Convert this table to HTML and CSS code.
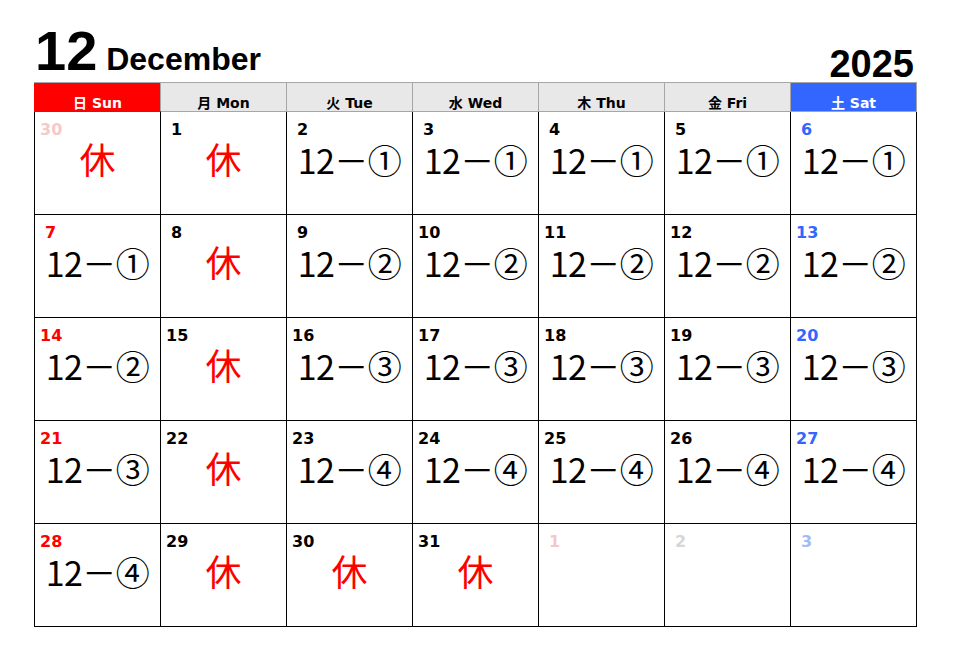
FILE: index.html
```html
<!DOCTYPE html>
<html lang="ja">
<head>
<meta charset="utf-8">
<title>December 2025</title>
<link rel="stylesheet" href="styles.css">
</head>
<body>
<div class="page">
  <div class="title">
    <div class="month"><span class="mnum">12</span><span class="mname"> December</span></div>
    <div class="year">2025</div>
  </div>
  <table class="cal">
    <thead>
      <tr>
        <th class="sun">日 Sun</th>
        <th>月 Mon</th>
        <th>火 Tue</th>
        <th>水 Wed</th>
        <th>木 Thu</th>
        <th>金 Fri</th>
        <th class="sat">土 Sat</th>
      </tr>
    </thead>
    <tbody>
      <tr>
        <td><span class="d prev-sun">30</span><div class="off">休</div></td>
        <td><span class="d one">1</span><div class="off">休</div></td>
        <td><span class="d one">2</span><div class="c">12－①</div></td>
        <td><span class="d one">3</span><div class="c">12－①</div></td>
        <td><span class="d one">4</span><div class="c">12－①</div></td>
        <td><span class="d one">5</span><div class="c">12－①</div></td>
        <td><span class="d one blue">6</span><div class="c">12－①</div></td>
      </tr>
      <tr>
        <td><span class="d one red">7</span><div class="c">12－①</div></td>
        <td><span class="d one">8</span><div class="off">休</div></td>
        <td><span class="d one">9</span><div class="c">12－②</div></td>
        <td><span class="d">10</span><div class="c">12－②</div></td>
        <td><span class="d">11</span><div class="c">12－②</div></td>
        <td><span class="d">12</span><div class="c">12－②</div></td>
        <td><span class="d blue">13</span><div class="c">12－②</div></td>
      </tr>
      <tr>
        <td><span class="d red">14</span><div class="c">12－②</div></td>
        <td><span class="d">15</span><div class="off">休</div></td>
        <td><span class="d">16</span><div class="c">12－③</div></td>
        <td><span class="d">17</span><div class="c">12－③</div></td>
        <td><span class="d">18</span><div class="c">12－③</div></td>
        <td><span class="d">19</span><div class="c">12－③</div></td>
        <td><span class="d blue">20</span><div class="c">12－③</div></td>
      </tr>
      <tr>
        <td><span class="d red">21</span><div class="c">12－③</div></td>
        <td><span class="d">22</span><div class="off">休</div></td>
        <td><span class="d">23</span><div class="c">12－④</div></td>
        <td><span class="d">24</span><div class="c">12－④</div></td>
        <td><span class="d">25</span><div class="c">12－④</div></td>
        <td><span class="d">26</span><div class="c">12－④</div></td>
        <td><span class="d blue">27</span><div class="c">12－④</div></td>
      </tr>
      <tr>
        <td><span class="d red">28</span><div class="c">12－④</div></td>
        <td><span class="d">29</span><div class="off">休</div></td>
        <td><span class="d">30</span><div class="off">休</div></td>
        <td><span class="d">31</span><div class="off">休</div></td>
        <td><span class="d one next-wk">1</span></td>
        <td><span class="d one next-fri">2</span></td>
        <td><span class="d one next-sat">3</span></td>
      </tr>
    </tbody>
  </table>
</div>
</body>
</html>
```
FILE: styles.css
```css
html, body {
  margin: 0;
  padding: 0;
  background: #ffffff;
}

.page {
  width: 883px;
  padding-left: 34px;
}

.title {
  display: flex;
  justify-content: space-between;
  align-items: flex-end;
  height: 82px;
  font-family: "Liberation Sans", Arial, sans-serif;
  font-weight: bold;
  color: #000;
}

.month {
  font-size: 56px;
  line-height: 56px;
  margin-bottom: 3px;
  padding-left: 1px;
  white-space: pre;
}

.mnum {
  font-size: 56px;
}

.mname {
  font-size: 32px;
  line-height: 32px;
}

.year {
  font-size: 38px;
  line-height: 38px;
  margin-bottom: -1px;
  margin-right: 3px;
}

.cal {
  border-collapse: collapse;
  table-layout: fixed;
  width: 883px;
}

.cal th {
  height: 27px;
  padding: 0 0 1px 0;
  vertical-align: bottom;
  text-align: center;
  font-family: "DejaVu Sans", "Noto Sans CJK JP", sans-serif;
  font-weight: bold;
  font-size: 14px;
  line-height: 14px;
  color: #000;
  background: #e8e8e8;
  border: 1px solid #a6a6a6;
}

.cal th.sun {
  background: #ff0000;
  color: #fff;
  border-left-color: #ff0000;
  border-bottom-color: #ff0000;
}

.cal th.sat {
  background: #3366ff;
  color: #fff;
}

.cal td {
  height: 102px;
  padding: 0;
  vertical-align: top;
  border: 1px solid #000;
}

.d {
  display: block;
  margin: 9px 0 0 5px;
  font-family: "DejaVu Sans", sans-serif;
  font-weight: bold;
  font-size: 16px;
  line-height: 18px;
  color: #000;
}

.d.one {
  padding-left: 5px;
}

.d.red { color: #ff0000; }
.d.blue { color: #3366ff; }
.d.prev-sun { color: #f6c9c9; }
.d.next-wk { color: #f4c8c8; }
.d.next-fri { color: #d6d6d6; }
.d.next-sat { color: #a3bcf5; }

.c, .off {
  text-align: center;
  font-family: "Noto Sans CJK JP", sans-serif;
  white-space: nowrap;
}

.c {
  font-size: 34px;
  letter-spacing: -0.5px;
  line-height: 40px;
  margin-top: 1px;
  color: #000;
}

.off {
  color: #ff0000;
  font-size: 36px;
  line-height: 40px;
  margin-top: -1px;
}
```
